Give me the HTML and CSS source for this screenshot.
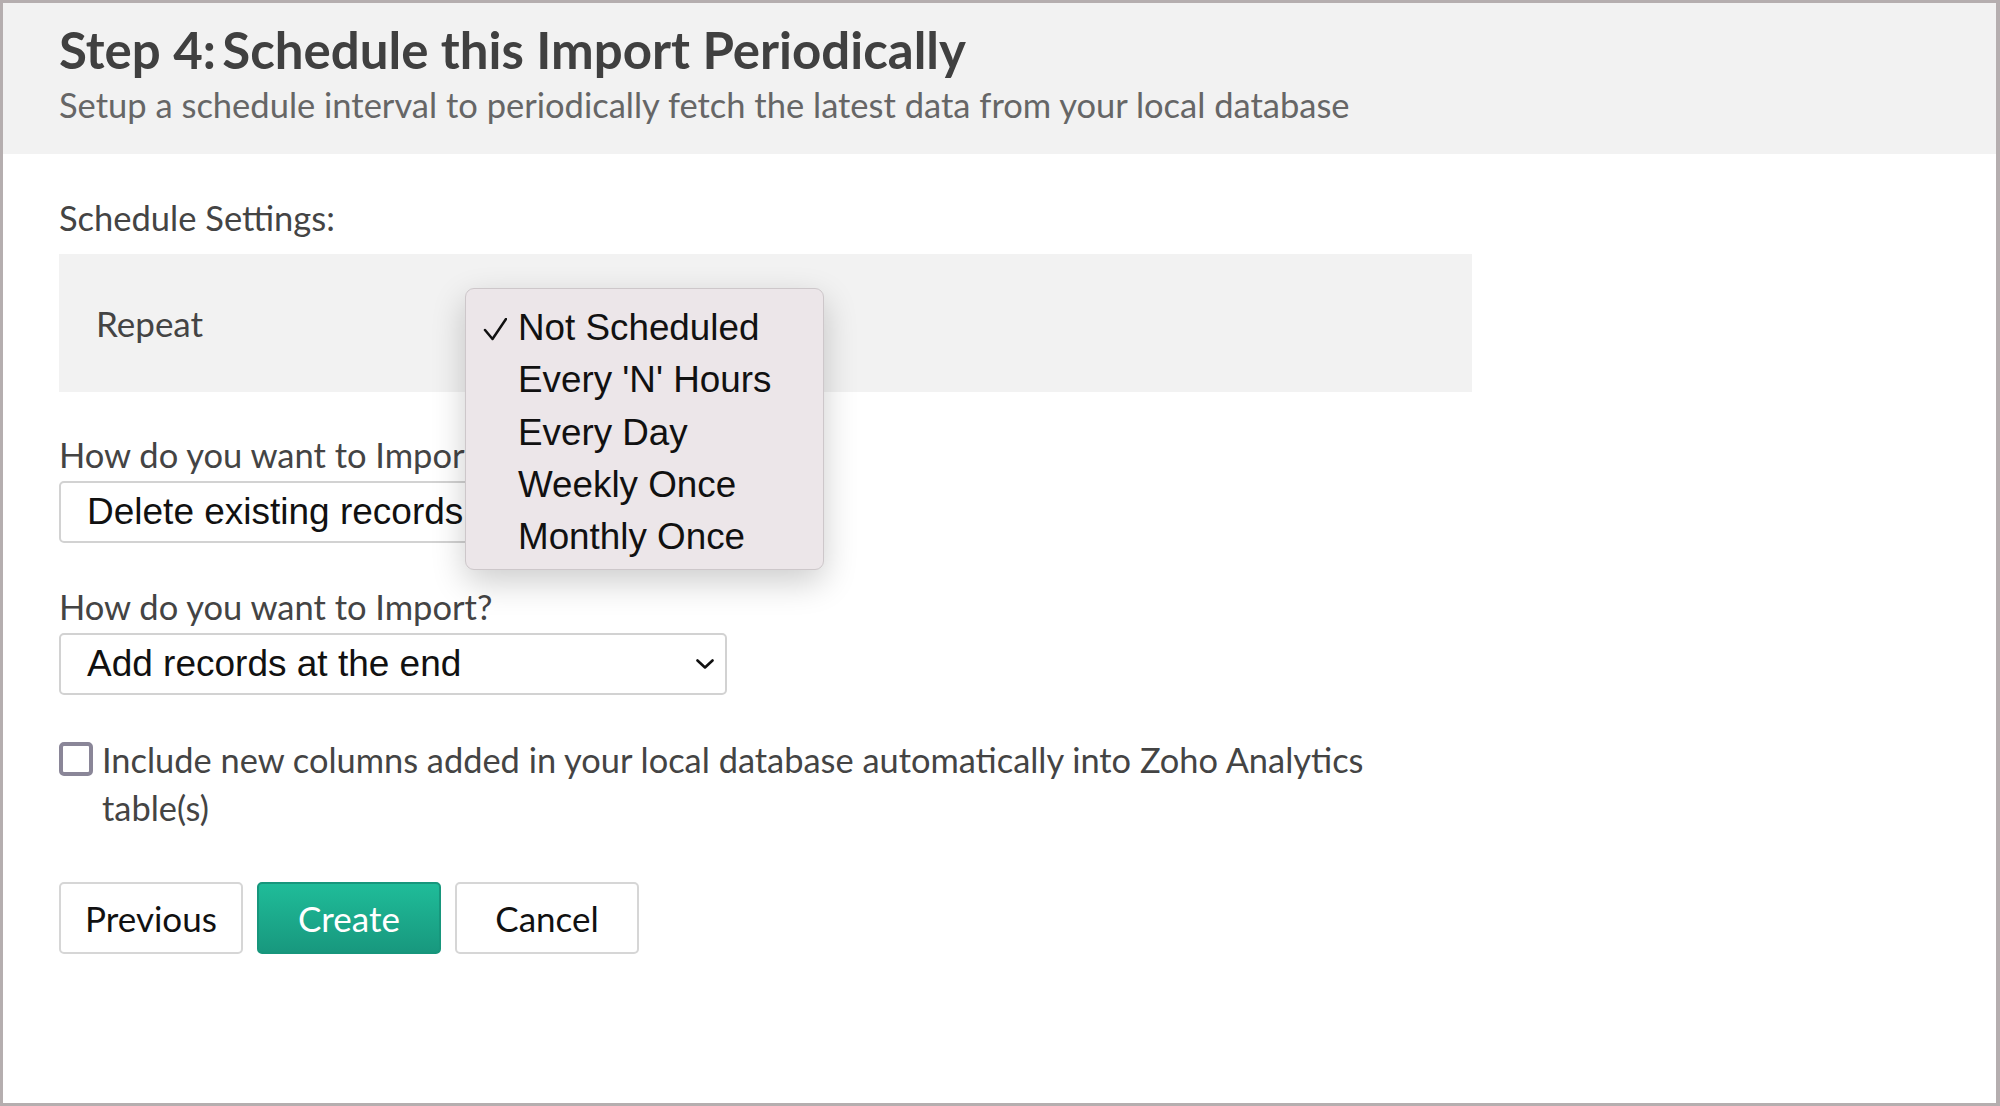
FILE: index.html
```html
<!DOCTYPE html>
<html lang="en">
<head>
    <meta charset="UTF-8">
    <meta name="viewport" content="width=device-width, initial-scale=1.0">
    <title>Schedule this Import</title>
    <link rel="stylesheet" href="styles.css">
</head>
<body>
    <div class="frame">
        <div class="header">
            <h1>Step 4:&thinsp;Schedule this Import Periodically</h1>
            <p class="subtitle">Setup a schedule interval to periodically fetch the latest data from your local database</p>
        </div>
        <div class="content">
            <div class="label">Schedule Settings:</div>
            <div class="panel">
                <span class="panel-label">Repeat</span>
                <ul class="menu">
                    <li class="checked">
                        <svg class="tick" width="24" height="24" viewBox="0 0 24 24"><path d="M2 12 L9.5 21 L23 1" fill="none" stroke="#111" stroke-width="2.5" stroke-linecap="round" stroke-linejoin="round"/></svg>
                        Not Scheduled
                    </li>
                    <li>Every 'N' Hours</li>
                    <li>Every Day</li>
                    <li>Weekly Once</li>
                    <li>Monthly Once</li>
                </ul>
            </div>

            <div class="field">
                <div class="label">How do you want to Import?</div>
                <div class="select">
                    <span>Delete existing records and add</span>
                    <svg class="chevron" width="18" height="10" viewBox="0 0 18 10"><path d="M1.5 1.5 L9 8.5 L16.5 1.5" fill="none" stroke="#111" stroke-width="2.6" stroke-linecap="round" stroke-linejoin="round"/></svg>
                </div>
            </div>

            <div class="field">
                <div class="label">How do you want to Import?</div>
                <div class="select">
                    <span>Add records at the end</span>
                    <svg class="chevron" width="18" height="10" viewBox="0 0 18 10"><path d="M1.5 1.5 L9 8.5 L16.5 1.5" fill="none" stroke="#111" stroke-width="2.6" stroke-linecap="round" stroke-linejoin="round"/></svg>
                </div>
            </div>

            <label class="check-row">
                <input type="checkbox">
                <span>Include new columns added in your local database automatically into Zoho Analytics table(s)</span>
            </label>

            <div class="buttons">
                <button class="btn">Previous</button>
                <button class="btn primary">Create</button>
                <button class="btn">Cancel</button>
            </div>
        </div>
    </div>
</body>
</html>
```

FILE: styles.css
```css
body {
    margin: 0;
    font-family: Lato, "Open Sans", sans-serif;
    background: #fff;
}

.frame {
    box-sizing: border-box;
    height: 1106px;
    border: 3px solid #b5aeaf;
    border-right-width: 4px;
    background: #fff;
}

.header {
    background: #f2f2f2;
    height: 151px;
    box-sizing: border-box;
    padding: 19px 56px 0;
}

h1 {
    margin: 0;
    font-size: 51px;
    line-height: 56px;
    font-weight: 700;
    color: #404040;
}

.subtitle {
    margin: 7px 0 0;
    font-size: 34.5px;
    line-height: 40px;
    color: #666;
}

.content {
    padding: 45px 56px 0;
}

.label {
    font-size: 34.5px;
    line-height: 38px;
    color: #444;
}

.panel {
    position: relative;
    width: 1413px;
    height: 138px;
    margin-top: 17px;
    background: #f2f2f2;
    display: flex;
    align-items: center;
    padding-left: 37px;
    box-sizing: border-box;
}

.panel-label {
    font-size: 35px;
    color: #444;
}

/* native dropdown popup */
.menu {
    position: absolute;
    left: 406px;
    top: 34px;
    z-index: 2;
    width: 359px;
    height: 282px;
    box-sizing: border-box;
    margin: 0;
    padding: 13px 0 0 52px;
    list-style: none;
    background: #ece6e9;
    border: 1px solid #cdc7ca;
    border-radius: 9px;
    box-shadow: 0 12px 34px rgba(0, 0, 0, 0.2);
    font-family: "Liberation Sans", Arial, sans-serif;
    font-size: 36.8px;
    color: #111;
}

.menu li {
    position: relative;
    line-height: 52.3px;
}

.tick {
    position: absolute;
    left: -35px;
    top: 16px;
}

.field {
    margin-top: 44px;
}

.field + .field {
    margin-top: 45px;
}

.select {
    margin-top: 7px;
    width: 668px;
    height: 62px;
    box-sizing: border-box;
    border: 2px solid #d2d2d2;
    border-radius: 5px;
    background: #fff;
    display: flex;
    align-items: center;
    justify-content: space-between;
    padding: 0 11px 0 26px;
    font-family: "Liberation Sans", Arial, sans-serif;
    font-size: 37px;
    color: #111;
    overflow: hidden;
    white-space: nowrap;
}

.chevron {
    flex-shrink: 0;
}

.check-row {
    display: flex;
    align-items: flex-start;
    gap: 9px;
    margin-top: 41px;
    width: 1413px;
    font-size: 34.4px;
    line-height: 48px;
    color: #444;
}

.check-row input {
    appearance: none;
    flex-shrink: 0;
    width: 34px;
    height: 34px;
    margin: 6px 0 0;
    border: 4px solid #8a8698;
    border-radius: 5px;
    background: #fff;
}

.check-row span {
    width: 1300px;
}

.buttons {
    display: flex;
    gap: 14px;
    margin-top: 50px;
}

.btn {
    width: 184px;
    height: 72px;
    border: 2px solid #d6d6d6;
    border-radius: 5px;
    background: #fff;
    font-family: Lato, sans-serif;
    font-size: 35px;
    color: #111;
}

.btn.primary {
    background: linear-gradient(#1fbc99, #18987e);
    border-color: #17967c;
    color: #fff;
}
```
